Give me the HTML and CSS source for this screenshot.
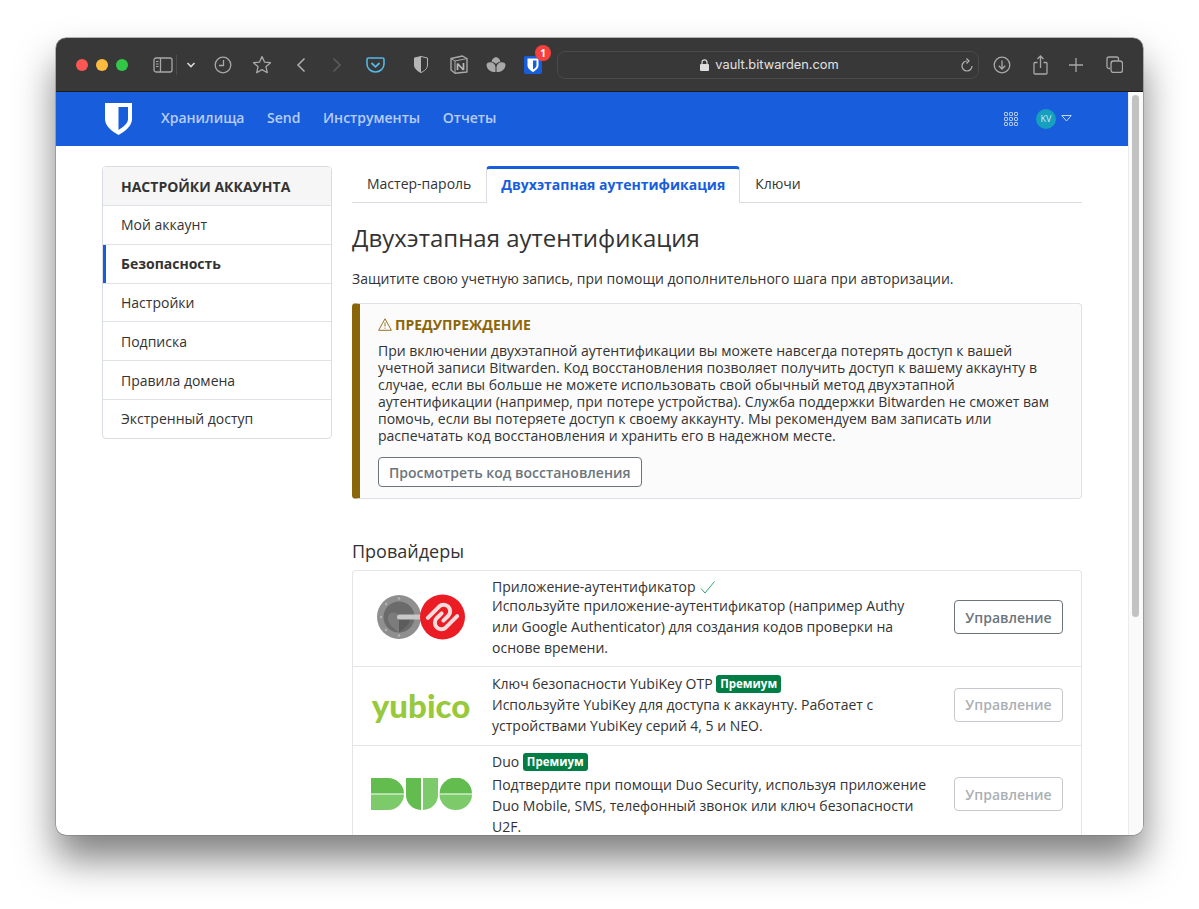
FILE: index.html
```html
<!DOCTYPE html>
<html lang="ru">

<head>
	<meta charset="utf-8">
	<title>Bitwarden Web Vault</title>
	<link rel="stylesheet" href="styles.css">
</head>

<body>
	<div class="window">
		<div class="toolbar">
			<div class="lights">
				<span class="light red"></span>
				<span class="light yellow"></span>
				<span class="light green"></span>
			</div>
			<svg class="tb" width="20" height="16" viewBox="0 0 20 16" fill="none" stroke="#a8a8a8" stroke-width="1.3"><rect x="1" y="1" width="18" height="14" rx="2"/><path d="M7.5 1v14"/><path d="M3 4.5h2.5M3 7h2.5M3 9.500h2.500" stroke-width="1"/></svg>
			<div class="chevron">
				<svg width="10" height="6" viewBox="0 0 10 6" fill="none" stroke="#d8d8d8" stroke-width="1.600"><path d="M1.500 1l3.500 3.500L8.500 1"/></svg>
			</div>
			<svg class="tb" width="18" height="18" viewBox="0 0 18 18" fill="none" stroke="#a8a8a8" stroke-width="1.300"><circle cx="9" cy="9" r="7.800"/><path d="M9.500 4v5.500H5"/></svg>
			<svg class="tb" width="20" height="19" viewBox="0 0 20 19" fill="none" stroke="#a8a8a8" stroke-width="1.300" stroke-linejoin="round"><path d="M10 1.500l2.500 5.600 6 .6-4.600 4 1.400 6L10 14.600l-5.300 3.100 1.400-6-4.600-4 6-.6z"/></svg>
			<svg class="tb" width="10" height="16" viewBox="0 0 10 16" fill="none" stroke="#b0b0b0" stroke-width="1.500"><path d="M8.500 1.500L2 8l6.500 6.500"/></svg>
			<svg class="tb" width="10" height="16" viewBox="0 0 10 16" fill="none" stroke="#5c5c5c" stroke-width="1.500"><path d="M1.500 1.500L8 8l-6.500 6.500"/></svg>
			<svg class="tb" width="19" height="16" viewBox="0 0 19 16" fill="none" stroke="#54b8e8" stroke-width="1.600"><path d="M1 2.500A1.500 1.500 0 0 1 2.500 1h14A1.500 1.500 0 0 1 18 2.500V7a8.500 8 0 0 1-17 0z"/><path d="M5.500 6l4 3.800L13.500 6" stroke-width="1.800"/></svg>
			<svg class="tb" width="14" height="17" viewBox="0 0 14 17"><path d="M7 .5L13.500 2v7c0 3.500-3 6-6.500 7.500C3.500 15 .5 12.500.5 9V2z" fill="none" stroke="#b5b5b5" stroke-width="1"/><path d="M7 .5L.5 2v7c0 3.500 3 6 6.500 7.500z" fill="#b5b5b5"/></svg>
			<svg class="tb" width="18" height="19" viewBox="0 0 18 19"><path d="M1 3.500L12.500 1 17 3.500V17l-12 1.200L1 15z" fill="#3a3a3a" stroke="#a8a8a8" stroke-width="1.400" stroke-linejoin="round"/><path d="M1 3.500L5 6l12-2.500M5 6v12" fill="none" stroke="#a8a8a8" stroke-width="1"/><path d="M7.500 8.500v6.500M7.500 8.500l6 6.500M13.500 8v7" fill="none" stroke="#b8b8b8" stroke-width="1.700"/></svg>
			<svg class="tb" width="20" height="16" viewBox="0 0 20 16" fill="#a8a8a8"><path d="M10 0c2.600.6 4.100 2.300 4.300 4.700C12.700 4.900 11 5.700 10 7 9 5.700 7.300 4.900 5.700 4.700 5.900 2.300 7.400.6 10 0z"/><path d="M.5 7.500C1 5.800 2.800 5 5 5.300c2.600.4 4.400 2.600 4.500 5.200V15C5 15.500.6 12.500.5 7.500z"/><path d="M19.500 7.500C19 5.800 17.200 5 15 5.300c-2.600.4-4.400 2.600-4.500 5.200V15c4.500.5 8.900-2.500 9-7.500z"/></svg>
			<div class="ext-badge">
				<svg width="18" height="18" viewBox="0 0 18 18"><rect width="18" height="18" rx="2" fill="#175ddc"/><path d="M3.500 2.500h11v7c0 3-3 5-5.500 6.500-2.500-1.500-5.500-3.500-5.500-6.500z" fill="#fff"/><path d="M9 4.500h3.500v5c0 1.800-2 3-3.500 4z" fill="#175ddc"/></svg>
				<span class="count">1</span>
			</div>
			<div class="urlbar">
				<span class="url">
					<svg width="9" height="12" viewBox="0 0 9 12"><path d="M2 5V3.300a2.500 2.500 0 0 1 5 0V5" fill="none" stroke="#ddd" stroke-width="1.200"/><rect y="5" width="9" height="7" rx="1" fill="#ddd"/></svg>
					vault.bitwarden.com
				</span>
				<svg class="reload" width="12" height="14" viewBox="0 0 12 14" fill="none" stroke="#b5b5b5" stroke-width="1.200"><path d="M6 3a5 5 0 1 0 5 5"/><path d="M5.500 .5L8 3 5.500 5.500"/></svg>
			</div>
			<svg class="tb" width="18" height="18" viewBox="0 0 18 18" fill="none" stroke="#a8a8a8" stroke-width="1.300"><circle cx="9" cy="9" r="7.800"/><path d="M9 4.500v8.500M5.800 9.800L9 13l3.200-3.200"/></svg>
			<svg class="tb" width="15" height="20" viewBox="0 0 15 20" fill="none" stroke="#a8a8a8" stroke-width="1.300"><path d="M4.500 7.500H2a1 1 0 0 0-1 1V18a1 1 0 0 0 1 1h11a1 1 0 0 0 1-1V8.500a1 1 0 0 0-1-1h-2.500"/><path d="M7.500 13V1M4.500 4l3-3 3 3"/></svg>
			<svg class="tb" width="14" height="14" viewBox="0 0 14 14" fill="none" stroke="#a8a8a8" stroke-width="1.300"><path d="M7 0v14M0 7h14"/></svg>
			<svg class="tb" width="17" height="17" viewBox="0 0 17 17" fill="none" stroke="#a8a8a8" stroke-width="1.300"><rect x="5" y="5" width="11.500" height="11.500" rx="2.500"/><path d="M4 12.500H3a2 2 0 0 1-2-2V3a2 2 0 0 1 2-2h7.500a2 2 0 0 1 2 2v1.500"/></svg>
		</div>

		<div class="viewport">
			<div class="page">
				<nav class="navbar">
					<svg class="logo" width="27" height="32" viewBox="0 0 27 32"><path d="M0 0h27v16c0 7-7 12.500-13.500 16C7 28.500 0 23 0 16z" fill="#fff"/><path d="M13.500 4H23v12c0 4.500-5 8-9.500 11z" fill="#175ddc"/></svg>
					<a class="nav-link">Хранилища</a>
					<a class="nav-link">Send</a>
					<a class="nav-link">Инструменты</a>
					<a class="nav-link">Отчеты</a>
					<svg class="apps" width="14" height="14" viewBox="0 0 14 14" fill="none" stroke="#dbe5f6" stroke-width="1"><rect x=".5" y=".5" width="3" height="3" rx=".8"/><rect x="5.500" y=".5" width="3" height="3" rx=".8"/><rect x="10.500" y=".5" width="3" height="3" rx=".8"/><rect x=".5" y="5.500" width="3" height="3" rx=".8"/><rect x="5.500" y="5.500" width="3" height="3" rx=".8"/><rect x="10.500" y="5.500" width="3" height="3" rx=".8"/><rect x=".5" y="10.500" width="3" height="3" rx=".8"/><rect x="5.500" y="10.500" width="3" height="3" rx=".8"/><rect x="10.500" y="10.500" width="3" height="3" rx=".8"/></svg>
					<span class="avatar">KV</span>
					<svg class="caret" width="11" height="7" viewBox="0 0 11 7" fill="none" stroke="#c6d6f3" stroke-width="1"><path d="M.8.5h9.400L5.500 6z"/></svg>
				</nav>

				<div class="container">
					<aside class="sidebar">
						<div class="side-title">НАСТРОЙКИ АККАУНТА</div>
						<a class="side-item">Мой аккаунт</a>
						<a class="side-item active">Безопасность</a>
						<a class="side-item">Настройки</a>
						<a class="side-item">Подписка</a>
						<a class="side-item">Правила домена</a>
						<a class="side-item">Экстренный доступ</a>
					</aside>

					<main class="content">
						<div class="tabs">
							<a class="tab">Мастер-пароль</a>
							<a class="tab active">Двухэтапная аутентификация</a>
							<a class="tab">Ключи</a>
						</div>

						<h1>Двухэтапная аутентификация</h1>
						<p class="lead">Защитите свою учетную запись, при помощи дополнительного шага при авторизации.</p>

						<div class="callout">
							<div class="callout-title">
								<svg width="14" height="13" viewBox="0 0 14 13" fill="none" stroke="#8b6609" stroke-width=".9"><path d="M7 .8l6.400 11.500H.6z" stroke-linejoin="round"/><path d="M7 4.500v4M7 9.700v1"/></svg>
								ПРЕДУПРЕЖДЕНИЕ
							</div>
							<p>При включении двухэтапной аутентификации вы можете навсегда потерять доступ к вашей учетной записи Bitwarden. Код восстановления позволяет получить доступ к вашему аккаунту в случае, если вы больше не можете использовать свой обычный метод двухэтапной аутентификации (например, при потере устройства). Служба поддержки Bitwarden не сможет вам помочь, если вы потеряете доступ к своему аккаунту. Мы рекомендуем вам записать или распечатать код восстановления и хранить его в надежном месте.</p>
							<button class="btn">Просмотреть код восстановления</button>
						</div>

						<h2>Провайдеры</h2>
						<div class="providers">
							<div class="provider first">
								<div class="provider-logo">
									<svg width="88" height="46" viewBox="0 0 88 46">
										<circle cx="22" cy="23" r="22" fill="#8f8f8f"/>
										<circle cx="22" cy="23" r="15.500" fill="#6b6b6b"/>
										<path d="M22 38.500c-5-4-11-8-11-14.500 0-3.500 2.500-5.500 5.500-5.500 2.300 0 4.300 1.200 5.500 3.500z" fill="#7c7c7c"/>
										<path d="M22 38.500c5-4 11-8 11-14.500h-11z" fill="#5c5c5c"/>
										<g fill="#b5b5b5"><circle cx="22" cy="4.500" r="1.200"/><circle cx="9" cy="10" r="1.200"/><circle cx="4" cy="23" r="1.200"/><circle cx="9" cy="36" r="1.200"/><circle cx="22" cy="41.500" r="1.200"/></g>
										<rect x="20" y="20.500" width="25" height="5" rx="2.500" fill="#c8c8c8"/>
										<circle cx="65.500" cy="23" r="22.500" fill="#ec1c24"/>
										<path d="M50.830 23.890L62.150 12.570a6.500 6.500 0 0 1 9.190 9.190l-4.950 4.950M80.170 22.110L68.850 33.430a6.500 6.500 0 0 1-9.190-9.190l4.950-4.950" fill="none" stroke="#f6dcdc" stroke-width="4" stroke-linecap="round"/>
									</svg>
								</div>
								<div class="provider-text">
									<div class="provider-name">Приложение-аутентификатор <svg class="check" width="15" height="13" viewBox="0 0 15 13" fill="none" stroke="#2fa56b" stroke-width="1"><path d="M1 7.500L5 12 14.500 .5"/></svg></div>
									<div>Используйте приложение-аутентификатор (например Authy или Google Authenticator) для создания кодов проверки на основе времени.</div>
								</div>
								<button class="btn">Управление</button>
							</div>
							<div class="provider">
								<div class="provider-logo"><span class="yubico">yubico</span></div>
								<div class="provider-text">
									<div>Ключ безопасности YubiKey OTP <span class="premium">Премиум</span></div>
									<div>Используйте YubiKey для доступа к аккаунту. Работает с устройствами YubiKey серий 4, 5 и NEO.</div>
								</div>
								<button class="btn disabled">Управление</button>
							</div>
							<div class="provider last">
								<div class="provider-logo">
									<svg width="101" height="32" viewBox="0 0 101 32">
										<path d="M0 0h17a16 16 0 0 1 16 15.500H0z" fill="#63bd4e"/>
										<path d="M0 16.500h33A16 16 0 0 1 17 32H0z" fill="#7dca6a"/>
										<path d="M35 0h15v32a15 15 0 0 1-15-15z" fill="#63bd4e"/>
										<path d="M52 0h15v17a15 15 0 0 1-15 15z" fill="#7dca6a"/>
										<path d="M68.500 15.500a16.250 16 0 0 1 32.500 0z" fill="#63bd4e"/>
										<path d="M68.500 16.500H101a16.250 15.500 0 0 1-32.500 0z" fill="#7dca6a"/>
									</svg>
								</div>
								<div class="provider-text">
									<div class="provider-title">Duo <span class="premium">Премиум</span></div>
									<div>Подтвердите при помощи Duo Security, используя приложение Duo Mobile, SMS, телефонный звонок или ключ безопасности U2F.</div>
								</div>
								<button class="btn disabled">Управление</button>
							</div>
						</div>
					</main>
				</div>
			</div>
			<div class="scrollbar"><div class="thumb"></div></div>
		</div>
	</div>
</body>

</html>
```

FILE: styles.css
```css
html {
	background-color: #fff;
}

body {
	margin: 0;
	padding: 38px 56px 0;
	height: 909px;
	box-sizing: border-box;
	overflow: hidden;
	background-color: #fff;
	font-family: "Open Sans", "Noto Sans", sans-serif;
	font-size: 14px;
	line-height: 21px;
	color: #333;
}

.window {
	width: 1087px;
	height: 797px;
	display: flex;
	flex-direction: column;
	border-radius: 10px;
	overflow: hidden;
	box-shadow: 0 0 0 .5px #777, 0 24px 38px rgba(0, 0, 0, .5);
	background-color: #fff;
}

/* browser toolbar */
.toolbar {
	flex: none;
	height: 53px;
	padding-left: 20px;
	display: grid;
	grid-template-columns: 74px 26px 28px 38px 40px 38px 34px 42px 50px 26px 48px 26px 11px 422px 46px 30px 42px 34px;
	align-items: center;
	justify-items: center;
	background-color: #383838;
	border-bottom: 1px solid #1a1a1a;
}

.lights {
	justify-self: start;
	display: flex;
	gap: 8px;
}

.light {
	width: 12px;
	height: 12px;
	border-radius: 50%;
}

.red {
	background-color: #fc5753;
}

.yellow {
	background-color: #fdbc40;
}

.green {
	background-color: #33c748;
}

.chevron {
	display: flex;
	align-items: center;
	height: 20px;
	padding-left: 9px;
	margin-left: -9px;
	border-left: 1px solid #4d4d4d;
}

.ext-badge {
	position: relative;
	width: 18px;
	height: 18px;
}

.count {
	position: absolute;
	top: -11px;
	left: 11px;
	width: 16px;
	height: 16px;
	border-radius: 50%;
	background-color: #f5403d;
	color: #fff;
	font-size: 10px;
	font-weight: 700;
	line-height: 16px;
	text-align: center;
}

.urlbar {
	grid-column: 14;
	width: 100%;
	height: 28px;
	box-sizing: border-box;
	display: flex;
	align-items: center;
	justify-content: center;
	position: relative;
	border: 1px solid #4a4a4a;
	border-radius: 8px;
}

.url {
	display: flex;
	align-items: center;
	gap: 6px;
	padding-left: 3px;
	font-family: "Inter", "Liberation Sans", sans-serif;
	font-size: 12.800px;
	color: #e2e2e2;
}

.reload {
	position: absolute;
	right: 5px;
	top: 6px;
}

/* page */
.viewport {
	flex: 1;
	display: flex;
	min-height: 0;
	overflow: hidden;
}

.page {
	flex: 1;
	min-width: 0;
}

.scrollbar {
	flex: none;
	width: 15px;
	background-color: #fafafa;
	border-left: 1px solid #ececec;
	box-sizing: border-box;
}

.thumb {
	width: 7px;
	height: 522px;
	margin: 3px 0 0 3px;
	border-radius: 4px;
	background-color: #c2c2c2;
}

.navbar {
	height: 54px;
	display: flex;
	align-items: center;
	padding-left: 49px;
	background-color: #175ddc;
}

.logo {
	margin-right: 29px;
}

.nav-link {
	margin-right: 22.600px;
	padding-bottom: 3px;
	font-size: 14px;
	font-weight: 600;
	color: rgba(255, 255, 255, .7);
}

.apps {
	margin-left: auto;
}

.avatar {
	width: 20px;
	height: 20px;
	margin-left: 18px;
	border-radius: 50%;
	background-color: #16a0bd;
	color: #cfeaf0;
	font-size: 9px;
	line-height: 20px;
	text-align: center;
}

.caret {
	margin: 0 56px 2px 5px;
}

.container {
	display: flex;
	align-items: flex-start;
	gap: 20px;
	padding: 20px 0 0 46px;
}

/* sidebar */
.sidebar {
	width: 230px;
	box-sizing: border-box;
	flex: none;
	border: 1px solid #d9dde3;
	border-radius: 4px;
	overflow: hidden;
}

.side-title {
	height: 38px;
	box-sizing: border-box;
	padding-left: 18px;
	display: flex;
	align-items: center;
	background-color: #f6f6f6;
	font-weight: 700;
}

.side-item {
	height: 38.800px;
	box-sizing: border-box;
	padding-left: 18px;
	display: flex;
	align-items: center;
	border-top: 1px solid #dfe2e7;
}

.side-item.active {
	font-weight: 700;
	box-shadow: inset 3px 0 0 #175ddc;
}

/* content */
.content {
	width: 730px;
	flex: none;
}

.tabs {
	display: flex;
	align-items: flex-start;
	height: 37px;
	box-sizing: border-box;
	border-bottom: 1px solid #d9dde3;
}

.tab {
	padding: 0 15px;
	height: 36px;
	line-height: 36px;
	box-sizing: border-box;
}

.tab.active {
	height: 37px;
	line-height: 32px;
	background-color: #fff;
	border: 1px solid #d9dde3;
	border-top: 3px solid #175ddc;
	border-bottom: 0;
	border-radius: 4px 4px 0 0;
	padding: 0 14px;
	font-weight: 700;
	color: #175ddc;
}

h1 {
	margin: 19px 0 0;
	font-size: 24px;
	font-weight: 400;
	line-height: 31px;
}

.lead {
	margin: 15px 0 0;
}

.callout {
	margin-top: 14px;
	height: 196px;
	box-sizing: border-box;
	padding: 10px 18px 0;
	background-color: #fbfbfb;
	border: 1px solid #dee2e6;
	border-left: 8px solid #8b6609;
	border-radius: 4px;
}

.callout-title {
	display: flex;
	align-items: center;
	gap: 3px;
	font-weight: 700;
	color: #8b6609;
}

.callout p {
	margin: 7px 0 0;
	line-height: 17px;
}

.btn {
	height: 30px;
	margin-top: 13px;
	padding: 0 10px;
	font-family: inherit;
	font-size: 14px;
	font-weight: 600;
	color: #6c757d;
	background-color: #fff;
	border: 1px solid #6c757d;
	border-radius: 4px;
}

.btn.disabled {
	color: #abb0b5;
	border-color: #c5c8cc;
}

h2 {
	margin: 40px 0 0;
	font-size: 18px;
	font-weight: 400;
	line-height: 24px;
}

.providers {
	margin-top: 7px;
	border: 1px solid #e3e5e8;
	border-bottom: 0;
	border-radius: 4px 4px 0 0;
}

.provider {
	display: flex;
	align-items: center;
	padding: 6px 18px 9px 0;
	border-bottom: 1px solid #e3e5e8;
}

.provider.first {
	padding-top: 5px;
	padding-bottom: 8px;
}

.provider.last {
	padding-top: 5px;
	padding-bottom: 9px;
}

.provider-logo {
	flex: none;
	width: 139px;
	box-sizing: border-box;
	padding-right: 3px;
	display: flex;
	justify-content: center;
}

.provider-text {
	flex: 1;
	padding-right: 25px;
}

.provider-name {
	margin-bottom: -2px;
}

.provider-title {
	margin-bottom: 2px;
}

.provider .btn {
	flex: none;
	width: 109px;
	height: 34px;
	margin: 0;
	padding: 0;
}

.check {
	vertical-align: -2px;
	margin-left: 1px;
}

.premium {
	display: inline-block;
	padding: 0 4px;
	background-color: #017e45;
	border-radius: 3px;
	color: #fff;
	font-size: 11.500px;
	font-weight: 700;
	line-height: 18px;
	vertical-align: 1px;
}

.yubico {
	font-family: "Lato", "Open Sans", sans-serif;
	font-size: 33px;
	font-weight: 900;
	line-height: 40px;
	color: #98c93c;
}
```
